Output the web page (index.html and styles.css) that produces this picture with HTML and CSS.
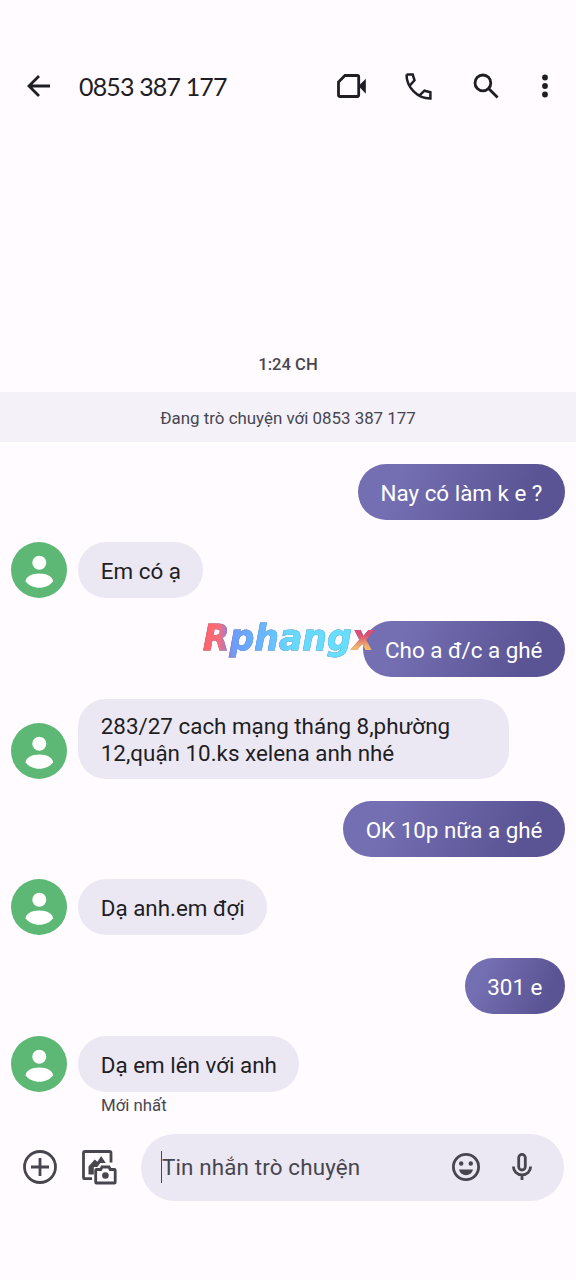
FILE: index.html
```html
<!DOCTYPE html>
<html lang="vi">
<head>
<meta charset="utf-8">
<title>0853 387 177</title>
<link rel="stylesheet" href="styles.css">
</head>
<body>
<svg class="defs" width="0" height="0">
  <symbol id="person" viewBox="0 0 56 56">
    <circle cx="28.3" cy="20.8" r="7"/>
    <path d="M14.6 39.2C14.6 34.8 20.500 31.400 28.300 31.400S42 34.800 42 39.200C39.200 43.400 34 45.700 28.300 45.700S17.400 43.400 14.600 39.200Z"/>
  </symbol>
</svg>
<div class="screen">
  <header class="bar">
    <svg class="icon back" viewBox="0 0 24 24"><path d="M23 12H2.500M12 2L2 12l10 10"/></svg>
    <h1 class="title">0853 387 177</h1>
    <svg class="icon video" viewBox="0 0 30 24"><path d="M8 1.500h12.300q1.400 0 1.400 1.400v18.200q0 1.400-1.400 1.400H2.900q-1.400 0-1.400-1.400V8z"/><path class="solid" d="M21.500 12L28.800 4.800v14.900z"/></svg>
    <svg class="icon phone" viewBox="0 0 27 27"><path d="M1.500 1.500h6.200l1.800 5.800-4.600 5.200M1.500 1.500C1.500 14.500 12.500 25.500 25.400 25.500v-6.200l-5.900-1.600-4.700 4.500"/></svg>
    <svg class="icon search" viewBox="0 0 26 26"><circle cx="9.900" cy="9.900" r="7.900"/><path d="M15.800 15.800l8.800 8.800"/></svg>
    <svg class="icon more" viewBox="0 0 8 24"><circle cx="4" cy="3.500" r="2.900"/><circle cx="4" cy="12" r="2.900"/><circle cx="4" cy="20.500" r="2.900"/></svg>
  </header>

  <main class="thread">
    <div class="time">1:24 CH</div>
    <div class="notice">Đang trò chuyện với 0853 387 177</div>
    <div class="messages">
      <div class="row out"><div class="bubble">Nay có làm k e ?</div></div>
      <div class="row in"><svg class="avatar" viewBox="0 0 56 56"><use href="#person"/></svg><div class="bubble">Em có ạ</div></div>
      <div class="row out">
        <div class="bubble">Cho a đ/c a ghé</div>
        <svg class="watermark" viewBox="0 0 180 46">
          <defs>
            <linearGradient id="brand" gradientUnits="userSpaceOnUse" x1="4" y1="0" x2="174" y2="0">
              <stop offset="0" stop-color="#ff6268"/><stop offset=".1" stop-color="#f96c7c"/><stop offset=".15" stop-color="#9c80d0"/><stop offset=".19" stop-color="#6c9dfb"/><stop offset=".38" stop-color="#68baff"/><stop offset=".52" stop-color="#67d9ff"/><stop offset="1" stop-color="#67e0ff"/>
            </linearGradient>
            <linearGradient id="tail" gradientUnits="userSpaceOnUse" x1="0" y1="14" x2="0" y2="34"><stop offset=".2" stop-color="#d95078"/><stop offset=".8" stop-color="#f2b56a"/></linearGradient>
          </defs>
          <text class="mark" x="5" y="33" textLength="171" lengthAdjust="spacingAndGlyphs"><tspan fill="url(#brand)" stroke="url(#brand)">Rphang</tspan><tspan fill="url(#tail)">x</tspan></text>
        </svg>
      </div>
      <div class="row in"><svg class="avatar" viewBox="0 0 56 56"><use href="#person"/></svg><div class="bubble double">283/27 cach mạng tháng 8,phường<br>12,quận 10.ks xelena anh nhé</div></div>
      <div class="row out"><div class="bubble">OK 10p nữa a ghé</div></div>
      <div class="row in"><svg class="avatar" viewBox="0 0 56 56"><use href="#person"/></svg><div class="bubble">Dạ anh.em đợi</div></div>
      <div class="row out"><div class="bubble">301 e</div></div>
      <div class="row in"><svg class="avatar" viewBox="0 0 56 56"><use href="#person"/></svg><div class="bubble">Dạ em lên với anh</div></div>
    </div>
    <div class="status">Mới nhất</div>
  </main>

  <footer class="composer">
    <svg class="tool plus" viewBox="0 0 34 34"><circle cx="17" cy="17" r="15.500"/><path d="M17 8v18M8 17h18"/></svg>
    <svg class="tool gallery" viewBox="0 0 35 35">
      <path d="M10 28.700H3q-1.500 0-1.500-1.500V3q0-1.500 1.500-1.500h24.500q1.500 0 1.500 1.500v9.500"/>
      <path class="solid" d="M6.500 24.500V16.500l6.200-7 2.800 2.300 3.600-5.800 4.700 7h-5.500l-3 4h-3.500v7.500z"/>
      <path class="camera" d="M14.500 19.500h4.200l1.300-2.500h7l1.300 2.500h4.100q.8 0 .8.800v11.900q0 .8-.8.800h-17.900q-.8 0-.8-.8V20.300q0-.8.800-.8Z"/>
      <circle class="solid" cx="23.400" cy="25.500" r="3.300"/>
    </svg>
    <div class="field">
      <span class="caret"></span>
      <span class="placeholder">Tin nhắn trò chuyện</span>
      <svg class="tool smile" viewBox="0 0 28 28"><circle cx="14" cy="14" r="12.600"/><circle class="solid" cx="9.200" cy="10.500" r="2.200"/><circle class="solid" cx="18.800" cy="10.500" r="2.200"/><path class="solid" d="M7 16.500h14c-1 3.600-3.700 5.700-7 5.700s-6-2.100-7-5.700z"/></svg>
      <svg class="tool mic" viewBox="0 0 20 28"><rect x="6.700" y="1.400" width="6.600" height="15.600" rx="3.300"/><path d="M1.400 13.400c0 5 3.600 8.400 8.600 8.400s8.600-3.400 8.600-8.400M10 21.800V27"/></svg>
    </div>
  </footer>
</div>
</body>
</html>
```

FILE: styles.css
```css
* { box-sizing: border-box; }

body {
  margin: 0;
  background: #fffbff;
  color: #1f1e24;
  font-family: Roboto, "Noto Sans", sans-serif;
}

.defs { position: absolute; }

.screen {
  display: flex;
  flex-direction: column;
  width: 576px;
  height: 1280px;
  overflow: hidden;
}

svg { flex: none; display: block; }

.bar {
  display: flex;
  align-items: center;
  height: 66px;
  margin-top: 53px;
  padding-left: 27px;
}

.icon { fill: none; stroke: #1f1e24; stroke-width: 2.8; }
.icon.phone { stroke-width: 2.5; }
.icon .solid, .icon.more { fill: #1f1e24; stroke: none; }
.back { width: 24px; height: 24px; }
.title {
  width: 258px;
  margin: 0 0 0 28px;
  font: 400 25px/32px Lato, Roboto, sans-serif;
  letter-spacing: -.85px;
  white-space: nowrap;
}
.video { width: 30px; height: 24px; }
.phone { width: 27px; height: 27px; margin-left: 38px; }
.search { width: 26px; height: 26px; margin-left: 40.500px; }
.more { width: 8px; height: 24px; margin-left: 42px; }

.thread { display: flex; flex-direction: column; padding-top: 232px; }

.time {
  height: 41px;
  padding-top: 3px;
  text-align: center;
  font-size: 16.600px;
  line-height: 22px;
  font-weight: 500;
  color: #47464f;
}

.notice {
  height: 49.500px;
  background: #f4f1f9;
  text-align: center;
  font-size: 16.900px;
  line-height: 52px;
  color: #47464f;
}

.messages {
  display: flex;
  flex-direction: column;
  gap: 22.400px;
  padding: 22.500px 11.200px 0;
}

.row { position: relative; display: flex; align-items: flex-end; gap: 11.200px; }
.out { justify-content: flex-end; }
.avatar { width: 56px; height: 56px; border-radius: 50%; background: #5cb874; fill: #fff; }

.bubble {
  height: 56px;
  padding: 16px 22.400px 0;
  border-radius: 28px;
  background: #ebe8f3;
  font-size: 22.400px;
  line-height: 26.250px;
  white-space: nowrap;
}
.double { width: 430.500px; height: 79.400px; padding-top: 14.200px; }
.out .bubble {
  background: linear-gradient(115deg, #746fb2 20%, #5a5494 80%);
  color: #fff;
}

/* Brand mark floats over the conversation */
.watermark { position: absolute; left: 187px; top: -4px; width: 180px; height: 46px; }
.mark {
  font: italic 700 36px "DejaVu Sans", sans-serif;
  stroke-width: .8px;
  filter: drop-shadow(.5px .8px .4px #526477);
}

.status { padding: 3px 0 1px 101px; font-size: 16.800px; line-height: 20px; color: #47464f; }

.composer { display: flex; align-items: center; height: 67px; margin-top: 17.500px; padding-left: 23px; }
.tool { fill: none; stroke: #47464f; stroke-width: 2.800; }
.tool .solid { fill: #47464f; stroke: none; }
.camera { fill: #fffbff; }
.plus { width: 34px; height: 34px; }
.gallery { width: 35px; height: 35px; margin-left: 24.500px; }
.field {
  display: flex;
  align-items: center;
  width: 423px;
  height: 67px;
  margin-left: 24.500px;
  padding-left: 20px;
  border-radius: 34px;
  background: #ebe8f3;
}
.caret { width: 1px; height: 32px; background: #47464f; }
.placeholder { width: 290px; font-size: 22.400px; line-height: 28px; letter-spacing: .14px; color: #47464f; white-space: nowrap; }
.smile { width: 28px; height: 28px; }
.mic { width: 20px; height: 28px; margin-left: 32px; }
```
